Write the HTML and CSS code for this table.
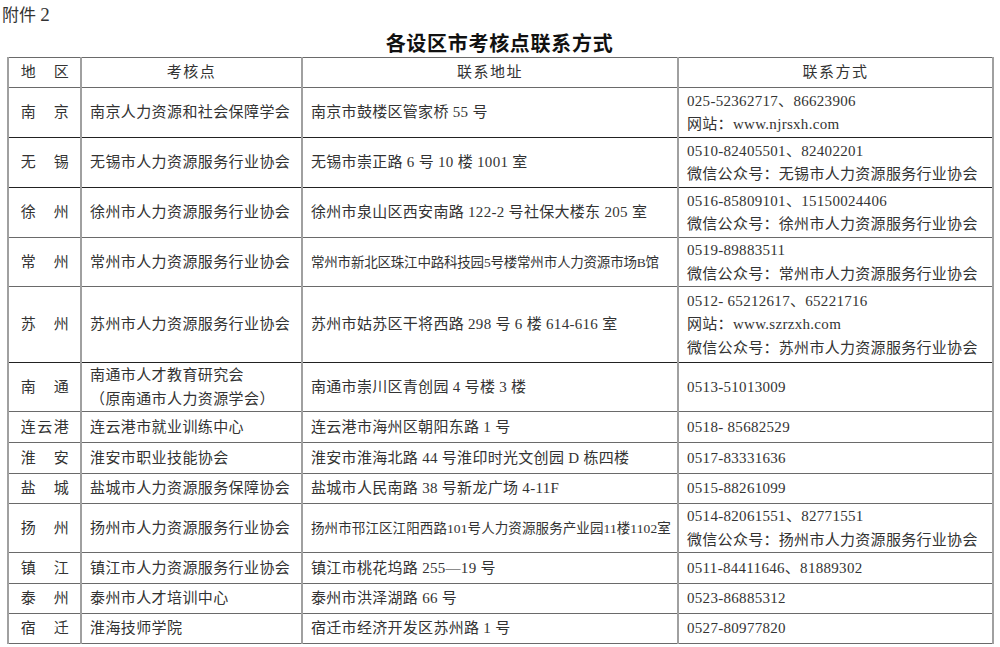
FILE: index.html
```html
<!DOCTYPE html>
<html lang="zh-CN">
<head>
<meta charset="utf-8">
<title>各设区市考核点联系方式</title>
<link rel="stylesheet" href="styles.css">
</head>
<body>
<div class="page">
  <div class="attach">附件 <span class="num">2</span></div>
  <h1 class="title">各设区市考核点联系方式</h1>
  <table class="grid">
    <colgroup><col class="c1"><col class="c2"><col class="c3"><col class="c4"></colgroup>
    <thead>
      <tr class="r30"><th class="area">地　区</th><th>考核点</th><th>联系地址</th><th>联系方式</th></tr>
    </thead>
    <tbody>
      <tr class="r50 dark"><td class="area">南　京</td><td class="org">南京人力资源和社会保障学会</td><td class="addr">南京市鼓楼区管家桥 55 号</td><td class="ct">025-52362717、86623906<br>网站：www.njrsxh.com</td></tr>
      <tr class="r50 dark"><td class="area">无　锡</td><td class="org">无锡市人力资源服务行业协会</td><td class="addr">无锡市崇正路 6 号 10 楼 1001 室</td><td class="ct">0510-82405501、82402201<br>微信公众号：无锡市人力资源服务行业协会</td></tr>
      <tr class="r50"><td class="area">徐　州</td><td class="org">徐州市人力资源服务行业协会</td><td class="addr">徐州市泉山区西安南路 122-2 号社保大楼东 205 室</td><td class="ct">0516-85809101、15150024406<br>微信公众号：徐州市人力资源服务行业协会</td></tr>
      <tr class="r49"><td class="area">常　州</td><td class="org">常州市人力资源服务行业协会</td><td class="addr tight">常州市新北区珠江中路科技园5号楼常州市人力资源市场B馆</td><td class="ct">0519-89883511<br>微信公众号：常州市人力资源服务行业协会</td></tr>
      <tr class="r76 dark"><td class="area">苏　州</td><td class="org">苏州市人力资源服务行业协会</td><td class="addr">苏州市姑苏区干将西路 298 号 6 楼 614-616 室</td><td class="ct">0512- 65212617、65221716<br>网站：www.szrzxh.com<br>微信公众号：苏州市人力资源服务行业协会</td></tr>
      <tr class="r49"><td class="area">南　通</td><td class="org">南通市人才教育研究会<br>（原南通市人力资源学会）</td><td class="addr">南通市崇川区青创园 4 号楼 3 楼</td><td class="ct">0513-51013009</td></tr>
      <tr class="r31"><td class="area">连云港</td><td class="org">连云港市就业训练中心</td><td class="addr">连云港市海州区朝阳东路 1 号</td><td class="ct">0518- 85682529</td></tr>
      <tr class="r31"><td class="area">淮　安</td><td class="org">淮安市职业技能协会</td><td class="addr">淮安市淮海北路 44 号淮印时光文创园 D 栋四楼</td><td class="ct">0517-83331636</td></tr>
      <tr class="r30"><td class="area">盐　城</td><td class="org">盐城市人力资源服务保障协会</td><td class="addr">盐城市人民南路 38 号新龙广场 4-11F</td><td class="ct">0515-88261099</td></tr>
      <tr class="r49"><td class="area">扬　州</td><td class="org">扬州市人力资源服务行业协会</td><td class="addr tight wide">扬州市邗江区江阳西路101号人力资源服务产业园11楼1102室</td><td class="ct">0514-82061551、82771551<br>微信公众号：扬州市人力资源服务行业协会</td></tr>
      <tr class="r31"><td class="area">镇　江</td><td class="org">镇江市人力资源服务行业协会</td><td class="addr">镇江市桃花坞路 255—19 号</td><td class="ct">0511-84411646、81889302</td></tr>
      <tr class="r30"><td class="area">泰　州</td><td class="org">泰州市人才培训中心</td><td class="addr">泰州市洪泽湖路 66 号</td><td class="ct">0523-86885312</td></tr>
      <tr class="r30"><td class="area">宿　迁</td><td class="org">淮海技师学院</td><td class="addr">宿迁市经济开发区苏州路 1 号</td><td class="ct">0527-80977820</td></tr>
    </tbody>
  </table>
</div>
</body>
</html>
```
FILE: styles.css
```css
html, body {
  margin: 0;
  background: #fff;
}
body {
  color: #333;
  font-family: "Liberation Serif", "Noto Sans CJK SC", serif;
}
.page {
  padding: 0 8px 0 7px;
}
.attach {
  font-size: 17px;
  line-height: 22px;
  padding: 4px 0 0;
  margin-left: -5px;
}
.attach .num {
  font-size: 19px;
}
.title {
  margin: 4px 0 0;
  font-size: 20px;
  line-height: 26px;
  font-weight: bold;
  text-align: center;
  letter-spacing: 0.7px;
  color: #111;
}
.grid {
  border-collapse: collapse;
  table-layout: fixed;
  width: 985px;
}
.c1 { width: 73px; }
.c2 { width: 221px; }
.c3 { width: 376px; }
.c4 { width: 315px; }
.grid th,
.grid td {
  border-top: 1px solid #6a6a6a;
  border-bottom: 1px solid #6a6a6a;
  border-left: 2px solid #a0a0a0;
  border-right: 2px solid #a0a0a0;
  padding: 1px 6px 0 8px;
  font-size: 15px;
  line-height: 23.5px;
  font-weight: normal;
  vertical-align: middle;
  text-align: left;
  white-space: nowrap;
  overflow: hidden;
}
.grid th {
  text-align: center;
  letter-spacing: 1.5px;
  padding-left: 6px;
}
.grid .area {
  text-align: center;
  letter-spacing: 1.5px;
  padding-left: 6px;
  padding-right: 4px;
}
.org { letter-spacing: 0.4px; }
.addr { letter-spacing: 0.3px; }
.addr.tight {
  font-size: 13.5px;
  letter-spacing: -0.2px;
}
.addr.tight.wide {
  letter-spacing: 0.1px;
}
.ct { letter-spacing: 0.3px; }
.dark td { border-bottom-color: #222; }
.r30 { height: 30px; }
.r31 { height: 31px; }
.r49 { height: 49px; }
.r50 { height: 50px; }
.r76 { height: 76px; }
```
